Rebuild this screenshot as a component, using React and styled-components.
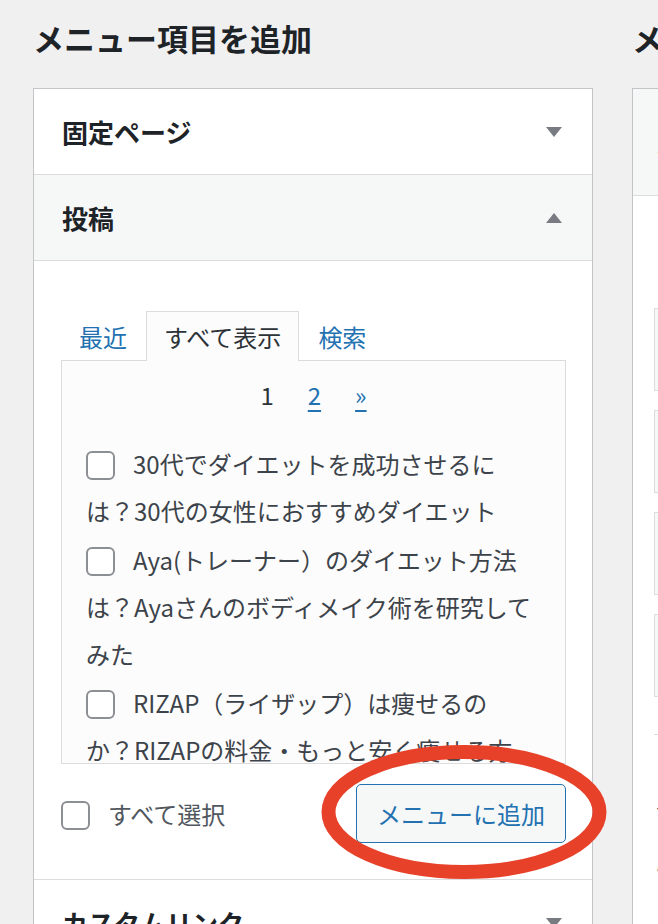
import React from 'react'
import styled, { createGlobalStyle } from 'styled-components'

const GlobalStyle = createGlobalStyle`
  html, body {
    margin: 0;
    padding: 0;
    background: #f0f0f1;
    overflow: hidden;
  }
  body {
    font-family: "Noto Sans CJK JP", "Noto Sans", sans-serif;
    color: #3c434a;
    font-size: 24px;
  }
  * {
    box-sizing: border-box;
  }
`

const items = [
  '30代でダイエットを成功させるには？30代の女性におすすめダイエット',
  'Aya(トレーナー）のダイエット方法は？Ayaさんのボディメイク術を研究してみた',
  'RIZAP（ライザップ）は痩せるのか？RIZAPの料金・もっと安く痩せる方法',
  '40代からのダイエット！無理なく続けられる方法とは？',
]

function Arrow({ up }) {
  return (
    <svg width="16" height="10" viewBox="0 0 16 10">
      <polygon
        points={up ? '0,10 16,10 8,0' : '0,0 16,0 8,10'}
        fill="#787c82"
      />
    </svg>
  )
}

function App() {
  return (
    <>
      <GlobalStyle />
      <Page>
        <Column $width={560}>
          <Title>メニュー項目を追加</Title>
          <Panel>
            <SectionHeader>
              固定ページ
              <Arrow />
            </SectionHeader>
            <SectionHeader $open>
              投稿
              <Arrow up />
            </SectionHeader>
            <SectionBody>
              <Tabs>
                <Tab>最近</Tab>
                <Tab $active>すべて表示</Tab>
                <Tab>検索</Tab>
              </Tabs>
              <TabPanel>
                <Pager>
                  <span>1</span>
                  <PageLink>2</PageLink>
                  <PageLink>»</PageLink>
                </Pager>
                <ItemList>
                  {items.map((text) => (
                    <Item key={text}>
                      <Check />
                      {text}
                    </Item>
                  ))}
                </ItemList>
              </TabPanel>
              <BottomRow>
                <SelectAll>
                  <Check />
                  すべて選択
                </SelectAll>
                <AddButton>メニューに追加</AddButton>
              </BottomRow>
            </SectionBody>
            <SectionHeader>
              カスタムリンク
              <Arrow />
            </SectionHeader>
          </Panel>
        </Column>

        <Column $width={420}>
          <Title>メニュー構造</Title>
          <StructurePanel>
            <StructureHeader>メニュー名</StructureHeader>
            <StructureBody>
              <Hint>ドラッグして各項目を好きな順番に並べ替えてください。</Hint>
              <MenuItem>ホーム</MenuItem>
              <MenuItem>ダイエット</MenuItem>
              <MenuItem>トレーニング</MenuItem>
              <MenuItem>お問い合わせ</MenuItem>
              <Settings>
                <SettingRow>メニュー設定</SettingRow>
                <SettingRow>自動でページを追加</SettingRow>
              </Settings>
            </StructureBody>
          </StructurePanel>
        </Column>

        <Circle width="320" height="160" viewBox="0 0 320 160">
          <ellipse
            cx="160"
            cy="80"
            rx="135.5"
            ry="60"
            fill="none"
            stroke="#e8412a"
            strokeWidth="14"
          />
        </Circle>
      </Page>
    </>
  )
}

export default App

const Page = styled.div`
  position: relative;
  display: flex;
  align-items: flex-start;
  gap: 39px;
  padding: 17px 0 0 33px;
  width: max-content;
`

const Column = styled.div`
  width: ${(p) => p.$width}px;
  flex-shrink: 0;
`

const Title = styled.h2`
  margin: 0 0 29px 0;
  font-size: 31px;
  line-height: 42px;
  font-weight: 600;
  color: #1d2327;
`

const Panel = styled.div`
  background: #fff;
  border: 1px solid #c3c4c7;
  border-bottom: none;
`

const SectionHeader = styled.div`
  display: flex;
  align-items: center;
  justify-content: space-between;
  height: 86px;
  padding: 0 30px 0 28px;
  border-bottom: 1px solid #dcdcde;
  background: ${(p) => (p.$open ? '#f6f7f7' : '#fff')};
  font-size: 26px;
  font-weight: 600;
  color: #1d2327;
`

const SectionBody = styled.div`
  padding: 50px 26px 36px 27px;
  border-bottom: 1px solid #dcdcde;
`

const Tabs = styled.div`
  display: flex;
  gap: 1px;
  margin-bottom: -1px;
  position: relative;
  z-index: 1;
`

const Tab = styled.div`
  padding: 0 17px;
  line-height: 49px;
  border: 1px solid ${(p) => (p.$active ? '#dcdcde' : 'transparent')};
  border-bottom: none;
  background: ${(p) => (p.$active ? '#fcfcfc' : 'transparent')};
  color: ${(p) => (p.$active ? '#2c3338' : '#2271b1')};
`

const TabPanel = styled.div`
  height: 404px;
  overflow: hidden;
  border: 1px solid #dcdcde;
  background: #fcfcfc;
`

const Pager = styled.div`
  display: flex;
  justify-content: center;
  gap: 34px;
  margin-top: 10px;
  line-height: 47px;
  color: #2c3338;
`

const PageLink = styled.span`
  color: #2271b1;
  text-decoration: underline;
  text-underline-offset: 5px;
`

const ItemList = styled.ul`
  list-style: none;
  margin: 22px 0 0 0;
  padding: 0 34px 0 24px;
`

const Item = styled.li`
  line-height: 47px;
  margin-bottom: 2px;
  color: #3c434a;
`

const Check = styled.span`
  display: inline-block;
  width: 29px;
  height: 29px;
  margin-right: 18px;
  vertical-align: middle;
  position: relative;
  top: -2px;
  border: 2px solid #8c8f94;
  border-radius: 6px;
  background: #fff;
`

const BottomRow = styled.div`
  display: flex;
  align-items: center;
  justify-content: space-between;
  margin-top: 20px;
`

const SelectAll = styled.div`
  line-height: 47px;
  color: #50575e;
`

const AddButton = styled.button`
  font: inherit;
  font-size: 24px;
  height: 59px;
  padding: 0 20px;
  border: 1.5px solid #2271b1;
  border-radius: 5px;
  background: #f6f7f7;
  color: #2271b1;
`

const StructurePanel = styled.div`
  background: #fff;
  border: 1px solid #c3c4c7;
  border-right: none;
  height: 900px;
`

const StructureHeader = styled.div`
  height: 107px;
  padding: 0 22px;
  display: flex;
  align-items: center;
  background: #f6f7f7;
  border-bottom: 1px solid #dcdcde;
  color: #1d2327;
`

const StructureBody = styled.div`
  padding: 29px 0 0 21px;
`

const Hint = styled.p`
  margin: 0 0 36px 0;
  line-height: 47px;
  white-space: nowrap;
`

const MenuItem = styled.div`
  height: 83px;
  margin-bottom: 19px;
  padding: 0 20px;
  display: flex;
  align-items: center;
  border: 1px solid #dcdcde;
  background: #f6f7f7;
  color: #1d2327;
  font-weight: 600;
`

const Settings = styled.div`
  margin-top: 37px;
  padding-top: 40px;
  border-top: 1px solid #dcdcde;
`

const SettingRow = styled.div`
  line-height: 47px;
  margin-bottom: 13px;
  white-space: nowrap;
  font-style: italic;
`

const Circle = styled.svg`
  position: absolute;
  left: 303.5px;
  top: 732px;
  pointer-events: none;
`
